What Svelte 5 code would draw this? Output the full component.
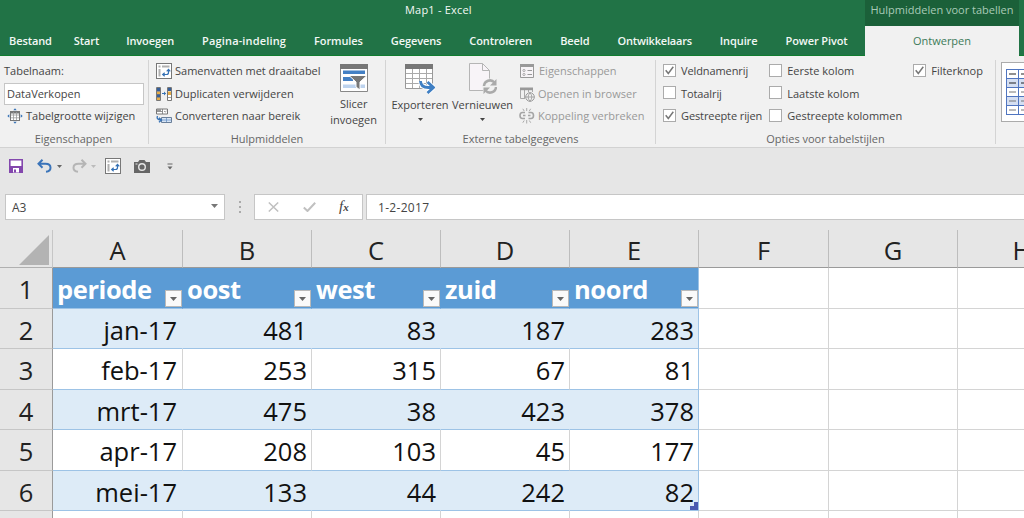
<script>
	const tabs = ['Bestand', 'Start', 'Invoegen', 'Pagina-indeling', 'Formules', 'Gegevens', 'Controleren', 'Beeld', 'Ontwikkelaars', 'Inquire', 'Power Pivot'];

	const tools = [
		{ icon: 'pivot', label: 'Samenvatten met draaitabel' },
		{ icon: 'duplicates', label: 'Duplicaten verwijderen' },
		{ icon: 'convert', label: 'Converteren naar bereik' }
	];

	const external = [
		{ icon: 'props', label: 'Eigenschappen' },
		{ icon: 'browser', label: 'Openen in browser' },
		{ icon: 'unlink', label: 'Koppeling verbreken' }
	];

	let options = $state([
		[
			{ label: 'Veldnamenrij', checked: true },
			{ label: 'Totaalrij', checked: false },
			{ label: 'Gestreepte rijen', checked: true }
		],
		[
			{ label: 'Eerste kolom', checked: false },
			{ label: 'Laatste kolom', checked: false },
			{ label: 'Gestreepte kolommen', checked: false }
		],
		[{ label: 'Filterknop', checked: true }]
	]);

	const letters = ['A', 'B', 'C', 'D', 'E', 'F', 'G', 'H'];
	const headers = ['periode', 'oost', 'west', 'zuid', 'noord'];
	const rows = [
		['jan-17', 481, 83, 187, 283],
		['feb-17', 253, 315, 67, 81],
		['mrt-17', 475, 38, 423, 378],
		['apr-17', 208, 103, 45, 177],
		['mei-17', 133, 44, 242, 82]
	];
	const empty = [5, 6, 7];
</script>

{#snippet icon(name)}
	<svg class="icon" width="16" height="16" viewBox="0 0 16 16" fill="none">
		{#if name === 'pivot'}
			<rect x=".5" y=".5" width="15" height="15" fill="#fff" stroke="#777" />
			<path d="M2.500 2.500h2v2h-2zM6 2.500h7.500v2H6zM2.500 6h2v7.500h-2z" fill="#b0b0b0" />
			<path d="M7 11.500h3.500q2 0 2-2V6.500M10.700 8.300l1.800-2 1.800 2M8.700 9.700l-2 1.800 2 1.800" stroke="#3571b5" stroke-width="1.200" />
		{:else if name === 'duplicates'}
			<path d="M.5 1.500h4v13h-4zM11.500 1.500h4v13h-4z" fill="#fff" stroke="#777" />
			<path d="M1 2h3v3H1zM12 2h3v3h-3z" fill="#365f99" />
			<path d="M1 5.500h3V8H1zM1 11h3v3H1zM12 5.500h3V9h-3z" fill="#e6ab45" />
			<path d="M1 8h3v3H1z" fill="#365f99" />
			<path d="M12 11.500h3M1 5.500h3M1 8.500h3M1 11.500h3" stroke="#777" stroke-width=".7" />
			<path d="M6 7.500h3.500M8 5.900l1.700 1.600L8 9.100" stroke="#3571b5" />
		{:else if name === 'convert'}
			<path d="M.5 1h11v5H.5z" fill="#fff" stroke="#777" />
			<path d="M1 1h4v2H1z" fill="#999" />
			<path d="M6.500 1v5M.5 3.500h6M8 3l1.200 1L10.500 3" stroke="#777" stroke-width=".8" />
			<path d="M5.500 9.500h10v5h-10z" fill="#d7e5f5" stroke="#6a7f99" />
			<path d="M6 12h9M10.500 10v4" stroke="#6a93c5" stroke-width=".8" />
			<path d="M1.500 8q-1.500 3.500 3.500 4M3 9.800 5.500 12 3 14.300" stroke="#3571b5" stroke-width="1.300" />
		{:else if name === 'resize'}
			<rect x="3.500" y="3.500" width="9" height="9" fill="#fff" stroke="#777" />
			<path d="M4 4h8v1.500H4z" fill="#777" />
			<path d="M6.500 4v8M9.500 4v8M4 7h8M4 9.800h8" stroke="#999" stroke-width=".8" />
			<path d="M8 .3l1.700 2H6.300zM8 15.700l1.700-2H6.300zM.3 8l2-1.700v3.400zM15.700 8l-2-1.700v3.400z" fill="#3571b5" />
		{:else if name === 'props'}
			<path d="M1.500 1.500h13v13h-13z" fill="#f7f4f7" stroke="#999" />
			<path d="M1 1h14v3H1z" fill="#999" />
			<path d="M8.500 7.500H13M8.500 11.500H13" stroke="#999" />
			<circle cx="5" cy="7.500" r="1.100" stroke="#999" stroke-width=".8" />
			<circle cx="5" cy="11.500" r="1.100" stroke="#999" stroke-width=".8" />
		{:else if name === 'browser'}
			<path d="M6 12.500H1.500v-10h12V6M5.500 4v8M9.500 4v2" stroke="#aaa" />
			<path d="M1 1.500h13v2.700H1z" fill="#999" />
			<circle cx="11" cy="11" r="4.300" fill="#f1f1f1" stroke="#999" />
			<path d="M6.800 11h8.500M11 6.800q-3.700 4.200 0 8.500M11 6.800q3.700 4.200 0 8.500" stroke="#999" stroke-width=".8" />
		{:else if name === 'unlink'}
			<path d="M6 4.500H3.500q-2.500 0-2.500 3t2.500 3H6M9.500 4.500h2.500q2.500 0 2.500 3t-2.500 3H9.500M4 7.500h2.500M9 7.500h2.500" stroke="#a5a5a5" stroke-width="1.600" />
			<path d="M7.700 0v3M3.800.8l1.400 2.200M11.700.8l-1.400 2.200M7.700 12v3.500M3.800 14.700l1.400-2.200M11.700 14.700l-1.400-2.200" stroke="#aaa" />
		{/if}
	</svg>
{/snippet}

{#snippet caret()}
	<svg class="caret" width="5" height="3" viewBox="0 0 5 3"><path d="M0 0h5L2.500 3z" fill="currentColor" /></svg>
{/snippet}

<div class="excel">
	<header>
		<div class="main">
			<div class="title">Map1 - Excel</div>
			<nav>
				{#each tabs as tab}
					<span>{tab}</span>
				{/each}
			</nav>
		</div>
		<div class="context">
			<div class="context-title">Hulpmiddelen voor tabellen</div>
			<div class="active">Ontwerpen</div>
		</div>
	</header>

	<section class="ribbon">
		<div class="group properties">
			<div class="body stack">
				<div class="line">Tabelnaam:</div>
				<div class="name-input">DataVerkopen</div>
				<div class="line resize">{@render icon('resize')}<span>Tabelgrootte wijzigen</span></div>
			</div>
			<div class="caption">Eigenschappen</div>
		</div>

		<div class="group helpers">
			<div class="body">
				<div class="stack list">
					{#each tools as tool}
						<div class="line">{@render icon(tool.icon)}<span>{tool.label}</span></div>
					{/each}
				</div>
				<div class="big slicer">
					<svg width="28" height="30" viewBox="0 0 28 30">
						<path d="M.5 1.500h27v26H.5z" fill="#fff" stroke="#888" />
						<path d="M0 0h28v5H0z" fill="#777" />
						<path d="M3 6.500h22v3.500H3zM3 13h10v4H3z" fill="#4480c4" />
						<path d="M3 20.500h22V24H3z" fill="#bdd3ee" />
						<path d="M9 11.500h18L20 18v8l-4-3v-5z" fill="#777" stroke="#fff" />
					</svg>
					<span>Slicer</span>
					<span>invoegen</span>
				</div>
			</div>
			<div class="caption">Hulpmiddelen</div>
		</div>

		<div class="group external">
			<div class="body">
				<div class="big export">
					<svg width="30" height="30" viewBox="0 0 30 30">
						<path d="M.5 1.500h27v23H.5z" fill="#fff" stroke="#999" />
						<path d="M7.500 5v19M14.500 5v19M21.500 5v19M1 9.500h26M1 14.500h26M1 19.500h26" stroke="#aaa" />
						<path d="M0 0h28v5H0z" fill="#777" />
						<path d="M15.500 17q0 6.500 8 6.500H28M22.500 18l6 5.500-6 5.500" fill="none" stroke="#fff" stroke-width="4.500" />
						<path d="M15.500 17q0 6.500 8 6.500H28M22.500 18l6 5.500-6 5.500" fill="none" stroke="#3f7fc3" stroke-width="2.800" />
					</svg>
					<span>Exporteren</span>
					{@render caret()}
				</div>
				<div class="big refresh">
					<svg width="28" height="32" viewBox="0 0 28 32" fill="none">
						<path d="M.5.5h13l7 7v20H.5z" fill="#f8f4f8" stroke="#b5b5b5" />
						<path d="M13.500.5v7h7" stroke="#b5b5b5" />
						<circle cx="21" cy="23.500" r="8" fill="#f1f1f1" />
						<path d="M15 23a6 6 0 0 1 10.500-3.500M27 24a6 6 0 0 1-10.500 3.500" stroke="#aaa" stroke-width="2.500" />
						<path d="M27.500 16v6.500H21zM14.500 31v-6.500H21z" fill="#aaa" />
					</svg>
					<span>Vernieuwen</span>
					{@render caret()}
				</div>
				<div class="stack list disabled">
					{#each external as item}
						<div class="line">{@render icon(item.icon)}<span>{item.label}</span></div>
					{/each}
				</div>
			</div>
			<div class="caption">Externe tabelgegevens</div>
		</div>

		<div class="group options">
			<div class="body">
				{#each options as column}
					<div class="stack">
						{#each column as option}
							<div class="line check">
								<button class="box" aria-label={option.label} onclick={() => (option.checked = !option.checked)}>
									{#if option.checked}
										<svg width="9" height="9" viewBox="0 0 9 9"><path d="M.7 4.200 3.300 7.500 8.300.8" fill="none" stroke="#777" stroke-width="1.500" /></svg>
									{/if}
								</button>
								<span>{option.label}</span>
							</div>
						{/each}
					</div>
				{/each}
			</div>
			<div class="caption">Opties voor tabelstijlen</div>
		</div>

		<div class="styles">
			<svg width="24" height="46" viewBox="0 0 24 46">
				<path d="M0 0h24v46H0z" fill="#fff" />
				<path d="M0 9h24v9H0zM0 27h24v9H0z" fill="#d5dff2" />
				<path d="M.5 0v46M12.500 0v46M0 .5h24M0 9.500h24M0 18.500h24M0 27.500h24M0 36.500h24M0 45.500h24" stroke="#5075c0" />
				<path d="M3 5h7M15 5h7M3 14h7M15 14h7" stroke="#222" stroke-width="1.200" />
				<path d="M3 23h7M15 23h7M3 32h7M15 32h7M3 41h7M15 41h7" stroke="#777" />
			</svg>
		</div>
	</section>

	<!-- Quick access toolbar -->
	<div class="quick">
		<svg class="save" width="14" height="14" viewBox="0 0 14 14">
			<path d="M.8.8h12.400v12.400H.8z" fill="#fff" stroke="#8347ad" stroke-width="1.600" />
			<path d="M1 7h12v6H1z" fill="#8347ad" />
			<path d="M4 9h6v4.500H4z" fill="#fff" />
			<path d="M5 10.500h2v3H5z" fill="#8347ad" />
		</svg>
		<svg class="undo" width="15" height="14" viewBox="0 0 15 14" fill="none" stroke="#3b74b9" stroke-width="2">
			<path d="M5.500.8 1.500 4.800l4 4M2 4.800h6.500q5 0 5 4 0 3.500-4.500 4" />
		</svg>
		{@render caret()}
		<svg class="redo" width="15" height="14" viewBox="0 0 15 14" fill="none" stroke="#b5b5b5" stroke-width="2">
			<path d="M9.500.8l4 4-4 4M13 4.800H6.500q-5 0-5 4 0 3.500 4.500 4" />
		</svg>
		<span class="faded">{@render caret()}</span>
		<span class="pivot">{@render icon('pivot')}</span>
		<svg class="camera" width="16" height="13" viewBox="0 0 16 13">
			<path d="M0 2h4l1.500-2h5L12 2h4v11H0z" fill="#666" />
			<circle cx="8" cy="7" r="3.300" fill="none" stroke="#e6e6e6" stroke-width="1.400" />
			<path d="M1.500 3.500h2v1h-2z" fill="#e6e6e6" />
		</svg>
		<svg class="more" width="6" height="7" viewBox="0 0 6 7"><path d="M.5 1h5" stroke="#666" /><path d="M.5 3.500h5L3 6.500z" fill="#666" /></svg>
	</div>

	<div class="formula">
		<div class="name-box"><span>A3</span><svg width="7" height="4" viewBox="0 0 7 4"><path d="M0 0h7L3.500 4z" fill="#777" /></svg></div>
		<div class="dots"><i></i><i></i><i></i></div>
		<div class="actions">
			<svg width="11" height="10" viewBox="0 0 11 10"><path d="M.8.5l9.400 9M10.200.5l-9.400 9" stroke="#c0c0c0" stroke-width="1.500" /></svg>
			<svg width="13" height="10" viewBox="0 0 13 10"><path d="M.8 5.500 4.500 9 12.200.8" fill="none" stroke="#c0c0c0" stroke-width="2" /></svg>
			<span class="fx">f<small>x</small></span>
		</div>
		<div class="value">1-2-2017</div>
	</div>

	<main class="sheet">
		<div class="corner"><svg width="30" height="30" viewBox="0 0 30 30"><path d="M30 0v30H0z" fill="#b3b3b3" /></svg></div>
		{#each letters as letter}
			<div class="letter">{letter}</div>
		{/each}

		<div class="number">1</div>
		{#each headers as header, i}
			<div class="cell head" class:edge={i === 4}>
				<span>{header}</span>
				<button class="filter" aria-label="Filter {header}"><svg width="7" height="4" viewBox="0 0 7 4"><path d="M0 0h7L3.500 4z" fill="#666" /></svg></button>
			</div>
		{/each}
		{#each empty as _}
			<div class="cell"></div>
		{/each}

		{#each rows as row, r}
			<div class="number">{r + 2}</div>
			{#each row as value, c}
				<div class="cell data" class:period={c === 0} class:band={r % 2 === 0} class:edge={c === 4}>
					{value}
					{#if r === 4 && c === 4}
						<svg class="handle" width="8" height="8" viewBox="0 0 8 8"><path d="M4 0h4v8H0V4h4z" fill="#4a5ab0" /></svg>
					{/if}
				</div>
			{/each}
			{#each empty as _}
				<div class="cell"></div>
			{/each}
		{/each}

		<div class="number"></div>
		{#each letters as _}
			<div class="cell"></div>
		{/each}
	</main>
</div>

<style>
	:global(body) {
		overflow: hidden;
	}

	.excel {
		width: 1024px;
		height: 518px;
		overflow: hidden;
		background: #e6e6e6;
		color: #444;
		font-family: "Open Sans", "Noto Sans", sans-serif;
		font-size: 11px;
		line-height: 16px;
	}

	.excel * {
		box-sizing: border-box;
	}

	svg {
		display: block;
		flex: none;
	}

	button {
		padding: 0;
		font: inherit;
	}

	/* Title bar and tabs */
	header {
		display: flex;
		height: 56px;
		background: #217346;
		border-bottom: 1px solid #107c2f;
		color: #f3f8f5;
	}

	.main {
		width: 865px;
	}

	.title {
		height: 26px;
		padding: 2px 0 0 405px;
		letter-spacing: 0.2px;
		font-weight: 500;
	}

	nav {
		display: flex;
		gap: 28px;
		padding: 7px 0 0 9px;
		font-weight: 600;
		letter-spacing: -0.1px;
		white-space: nowrap;
	}

	nav span:nth-child(2) {
		margin-left: -6px;
	}

	nav span:nth-child(3) {
		margin-left: -1px;
	}

	nav span:nth-child(4) {
		letter-spacing: 0.15px;
	}

	nav span:nth-child(9) {
		letter-spacing: -0.2px;
	}

	.context {
		width: 154px;
		height: 56px;
		text-align: center;
	}

	.context-title {
		height: 26px;
		padding-top: 2px;
		background: #1b6039;
		color: #a9cbb7;
		white-space: nowrap;
	}

	.active {
		height: 30px;
		padding-top: 7px;
		background: #f1f1f1;
		color: #3d7a59;
	}

	/* Ribbon */
	.ribbon {
		display: flex;
		height: 92px;
		padding-top: 4px;
		background: #f1f1f1;
		border-bottom: 1px solid #d2d2d2;
	}

	.group {
		display: flex;
		flex: none;
		flex-direction: column;
		height: 84px;
		border-right: 1px solid #d4d4d4;
		white-space: nowrap;
	}

	.body {
		display: flex;
		flex: none;
		height: 71px;
	}

	.stack {
		display: flex;
		flex-direction: column;
	}

	.line {
		display: flex;
		align-items: center;
		height: 22.500px;
		gap: 3px;
	}

	.caption {
		text-align: center;
		color: #666;
	}

	.properties {
		width: 149px;
		padding-left: 4px;
	}

	.properties .caption {
		padding-right: 5px;
	}

	.name-input {
		width: 140px;
		height: 22px;
		padding: 2px 2px;
		background: #fff;
		border: 1px solid #c6c6c6;
	}

	.resize {
		padding-left: 3px;
	}

	.helpers {
		width: 237px;
	}

	.list {
		padding-left: 7px;
	}

	.big {
		display: flex;
		flex-direction: column;
		align-items: center;
	}

	.slicer {
		margin-left: auto;
		padding: 4px 8px 0 0;
	}

	.slicer span:first-of-type {
		margin-top: 2px;
	}

	.external {
		width: 270px;
	}

	.export {
		width: 67px;
		padding: 4px 0 0 1px;
	}

	.refresh {
		width: 59px;
		padding-top: 3px;
	}

	.export span {
		margin-top: 3px;
	}

	.refresh span {
		margin-top: 2px;
	}

	.big .caret {
		margin-top: 5px;
	}

	.disabled {
		color: #999;
	}

	.disabled .line:first-child {
		gap: 4px;
		padding-left: 0;
	}

	.options {
		width: 340px;
	}

	.options .stack {
		width: 108px;
		padding-left: 7px;
	}

	.options .stack:nth-child(1) {
		letter-spacing: -0.1px;
	}

	.options .stack:nth-child(2) {
		width: 143px;
	}

	.options .stack:nth-child(3) {
		padding-left: 11px;
	}

	.check {
		gap: 5px;
	}

	.box {
		display: flex;
		align-items: center;
		justify-content: center;
		width: 13px;
		height: 13px;
		margin-top: -2px;
		background: #fff;
		border: 1px solid #ababab;
	}

	.styles {
		flex: none;
		width: 40px;
		height: 60px;
		margin: 2px 0 0 5px;
		padding: 6px 0 0 4px;
		background: #fff;
		border: 1px solid #ababab;
	}

	/* Quick access toolbar */
	.quick {
		display: flex;
		align-items: center;
		height: 36px;
		padding-left: 9px;
		color: #666;
	}

	.undo {
		margin: 0 5px 0 14px;
	}

	.redo {
		margin: 0 4px 0 10px;
	}

	.faded {
		color: #bbb;
	}

	.pivot {
		margin: 0 13px 0 9px;
	}

	.more {
		margin-left: 17px;
	}

	/* Formula bar */
	.formula {
		display: flex;
		height: 46px;
		padding: 10px 0 0 5px;
		font-size: 12px;
	}

	.name-box,
	.actions,
	.value {
		display: flex;
		align-items: center;
		height: 26px;
		background: #fff;
		border: 1px solid #c6c6c6;
	}

	.name-box {
		justify-content: space-between;
		width: 220px;
		padding: 0 6px;
	}

	.name-box span {
		margin-top: 2px;
	}

	.name-box svg {
		margin-top: -2px;
	}

	.dots {
		display: flex;
		flex-direction: column;
		align-items: center;
		justify-content: center;
		gap: 3px;
		width: 29px;
		height: 26px;
	}

	.dots i {
		width: 2px;
		height: 2px;
		background: #aaa;
	}

	.actions {
		gap: 24px;
		width: 109px;
		padding-left: 13px;
	}

	.fx {
		margin: -2px 0 0 -1px;
		color: #444;
		font-family: "Liberation Serif", serif;
		font-size: 15px;
		font-style: italic;
	}

	.fx small {
		font-size: 11px;
		font-weight: bold;
	}

	.value {
		flex: 1;
		margin-left: 3px;
		padding: 2px 0 0 11px;
		border-right: 0;
		letter-spacing: 0.3px;
	}

	/* Worksheet */
	.sheet {
		display: grid;
		grid-template-columns: 53px 130px 129px 129px 129px 129px 130px 129px 129px;
		grid-template-rows: 38px 41px 40px 41px 40px 41px 40px 40px;
		color: #111;
		font-size: 25.500px;
		line-height: 38px;
	}

	.corner,
	.letter,
	.number {
		border-right: 1px solid #b0b0b0;
		border-bottom: 1px solid #b0b0b0;
		color: #222;
		text-align: center;
	}

	.letter {
		border-color: #bdbdbd;
		border-bottom-color: #9a9a9a;
		line-height: 40px;
	}

	.corner {
		display: flex;
		align-items: flex-end;
		justify-content: flex-end;
		padding: 0 3px 2px 0;
		border-right-color: #c6c6c6;
	}

	.number {
		border-right-color: #9a9a9a;
		border-bottom-color: #c6c6c6;
		line-height: 42px;
	}

	.cell {
		background: #fff;
		border-right: 1px solid #d4d4d4;
		border-bottom: 1px solid #d4d4d4;
	}

	.data {
		position: relative;
		padding-right: 4px;
		border-bottom-color: #9dc3e6;
		line-height: 42px;
		text-align: right;
	}

	.period {
		padding-right: 5px;
	}

	.band {
		background: #ddebf7;
		border-right-color: #ddebf7;
	}

	.head {
		display: flex;
		align-items: flex-end;
		justify-content: space-between;
		padding: 0 0 1px 4px;
		background: #5b9bd5;
		border-color: #5b9bd5;
		border-bottom-color: #9dc3e6;
		color: #fff;
		font-weight: 700;
		letter-spacing: -0.4px;
	}

	.head span {
		line-height: 36px;
	}

	.edge {
		border-right-color: #9dc3e6;
	}

	.filter {
		display: flex;
		align-items: center;
		justify-content: center;
		width: 17px;
		height: 17px;
		background: #fafafa;
		border: 1px solid #b9b9b9;
	}

	.handle {
		position: absolute;
		right: 0;
		bottom: 0;
	}
</style>
